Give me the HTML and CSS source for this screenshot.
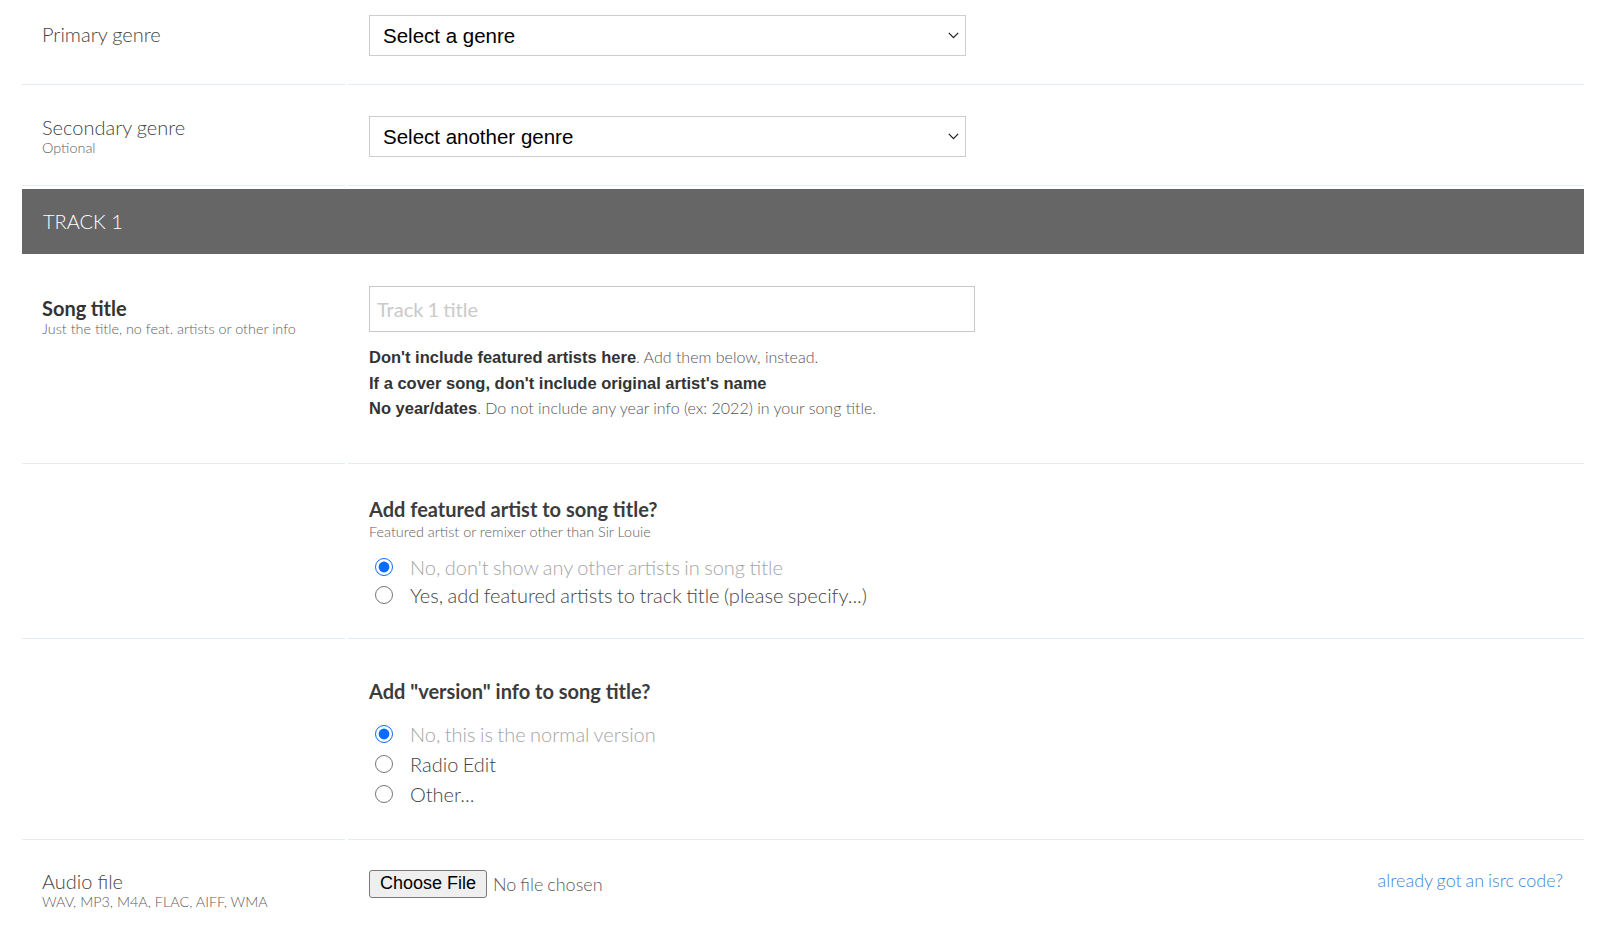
FILE: index.html
```html
<!DOCTYPE html>
<html lang="en">
<head>
<meta charset="utf-8">
<title>Release form</title>
<link rel="stylesheet" href="styles.css">
</head>
<body>
<form class="form">
  <div class="row row--first">
    <div class="cell cell--label"><div class="label">Primary genre</div></div>
    <div class="cell cell--field">
      <select class="select"><option>Select a genre</option></select>
    </div>
  </div>

  <div class="row row--second">
    <div class="cell cell--label">
      <div class="label">Secondary genre</div>
      <div class="hint">Optional</div>
    </div>
    <div class="cell cell--field">
      <select class="select"><option>Select another genre</option></select>
    </div>
  </div>

  <div class="track-bar">TRACK 1</div>

  <div class="row row--title">
    <div class="cell cell--label">
      <div class="label label--bold">Song title</div>
      <div class="hint">Just the title, no feat. artists or other info</div>
    </div>
    <div class="cell cell--field">
      <input class="text-input" type="text" placeholder="Track 1 title">
      <div class="help">
        <p><b>Don't include featured artists here</b>. Add them below, instead.</p>
        <p><b>If a cover song, don't include original artist's name</b></p>
        <p><b>No year/dates</b>. Do not include any year info (ex: 2022) in your song title.</p>
      </div>
    </div>
  </div>

  <div class="row row--featured">
    <div class="cell cell--label"></div>
    <div class="cell cell--field">
      <div class="question">Add featured artist to song title?</div>
      <div class="hint hint--question">Featured artist or remixer other than Sir Louie</div>
      <div class="radios radios--featured">
        <label class="radio radio--muted"><input type="radio" name="feat" checked><span>No, don't show any other artists in song title</span></label>
        <label class="radio"><input type="radio" name="feat"><span>Yes, add featured artists to track title (please specify...)</span></label>
      </div>
    </div>
  </div>

  <div class="row row--version">
    <div class="cell cell--label"></div>
    <div class="cell cell--field">
      <div class="question">Add "version" info to song title?</div>
      <div class="radios radios--version">
        <label class="radio radio--muted"><input type="radio" name="ver" checked><span>No, this is the normal version</span></label>
        <label class="radio"><input type="radio" name="ver"><span>Radio Edit</span></label>
        <label class="radio"><input type="radio" name="ver"><span>Other...</span></label>
      </div>
    </div>
  </div>

  <div class="row row--audio">
    <div class="cell cell--label cell--plain">
      <div class="label">Audio file</div>
      <div class="hint">WAV, MP3, M4A, FLAC, AIFF, WMA</div>
    </div>
    <div class="cell cell--field cell--plain">
      <div class="file-line">
        <div class="file">
          <button type="button" class="file-btn">Choose File</button>
          <span class="file-name">No file chosen</span>
        </div>
        <a class="isrc-link" href="#">already got an isrc code?</a>
      </div>
    </div>
  </div>
</form>
</body>
</html>
```

FILE: styles.css
```css
html, body {
  margin: 0;
  padding: 0;
  background: #ffffff;
}

body {
  font-family: Lato, "Open Sans", "Liberation Sans", sans-serif;
  font-weight: 300;
  color: #444444;
}

.form {
  width: 1562px;
  margin-left: 22px;
  display: flex;
  flex-direction: column;
  gap: 3px;
}

.row {
  display: grid;
  grid-template-columns: 323px 1236px;
  column-gap: 3px;
}

.cell {
  border-bottom: 1px solid #e3edf8;
  box-sizing: border-box;
}

.cell--plain {
  border-bottom: none;
}

.cell--label {
  padding: 27px 20px 0 20px;
}

.cell--field {
  padding: 28px 21px 28px 21px;
}

.label {
  font-size: 20px;
  line-height: 24px;
  color: #444444;
  word-spacing: -0.5px;
}

.label--bold {
  font-weight: 700;
  color: #333333;
}

.hint {
  font-size: 14.4px;
  line-height: 18px;
  font-weight: 300;
  color: #5e5e5e;
}

.hint--question {
  margin-top: 2px;
}

/* row specific spacing */
.row--first .cell--field { padding-top: 15px; }
.row--first .cell--label { padding-top: 22px; }

.row--title .cell--label { padding-top: 39px; }
.row--title .cell--field { padding-top: 29px; padding-bottom: 42px; }

.row--featured .cell--field { padding-top: 30px; padding-bottom: 28px; }
.row--version .cell--field { padding-top: 37px; padding-bottom: 30px; }

.row--audio .cell--label { padding-top: 26px; }
.row--audio .cell--field { padding-top: 27px; }

/* select */
.select {
  -webkit-appearance: none;
  appearance: none;
  display: block;
  width: 597px;
  height: 41px;
  margin: 0;
  padding: 0 30px 0 13px;
  border: 1px solid #cdcdcd;
  border-radius: 0;
  background: #ffffff url("data:image/svg+xml;utf8,<svg xmlns='http://www.w3.org/2000/svg' width='11' height='7' viewBox='0 0 11 7'><path d='M0.8 0.9 L5.5 5.6 L10.2 0.9' fill='none' stroke='%23222222' stroke-width='1.3'/></svg>") no-repeat right 6px center;
  font-family: "Liberation Sans", Arial, sans-serif;
  font-size: 20.5px;
  color: #000000;
  box-sizing: border-box;
}

/* track bar */
.track-bar {
  height: 65px;
  background: #666666;
  color: #ffffff;
  font-size: 20px;
  font-weight: 300;
  line-height: 65px;
  padding-left: 21px;
}

/* text input */
.text-input {
  display: block;
  width: 606px;
  height: 46px;
  margin: 0;
  padding: 0 7px;
  border: 1px solid #c8c8c8;
  border-radius: 0;
  box-sizing: border-box;
  font-family: Lato, "Open Sans", sans-serif;
  font-weight: 400;
  font-size: 20px;
  word-spacing: -1px;
  color: #333333;
}

.text-input::placeholder {
  color: #cacaca;
}

.help {
  margin-top: 12px;
  font-size: 16px;
  line-height: 25px;
  color: #555555;
}

.help p {
  margin: 0;
  height: 25.5px;
}

.help b {
  font-family: "Liberation Sans", Arial, sans-serif;
  font-size: 16.5px;
  line-height: 1;
  font-weight: 700;
  color: #333333;
}

/* questions + radios */
.question {
  font-size: 20px;
  line-height: 24px;
  font-weight: 700;
  color: #3c3c3c;
}

.radios {
  display: flex;
  flex-direction: column;
}

.radios--featured { margin-top: 12px; }
.radios--featured .radio { height: 28.5px; }
.radios--version { margin-top: 16px; }

.radio {
  display: flex;
  align-items: center;
  height: 30px;
  font-size: 20px;
  color: #444444;
  word-spacing: -1px;
}

.radio input {
  width: 18px;
  height: 18px;
  margin: 0 17px 0 6px;
  accent-color: #0a6cff;
}

.radio--muted {
  color: #a5a5a5;
}

/* audio file */
.file-line {
  display: flex;
  justify-content: space-between;
  align-items: center;
}

.file {
  display: flex;
  align-items: center;
  gap: 6px;
}

.file-btn {
  height: 28px;
  padding: 0 10px;
  margin: 0;
  border: 1px solid #7a7a7a;
  border-radius: 3px;
  background: #efefef;
  font-family: "Liberation Sans", Arial, sans-serif;
  font-size: 18px;
  color: #000000;
}

.file-name {
  font-size: 18px;
  color: #5a5a5a;
  word-spacing: -1px;
}

.isrc-link {
  align-self: flex-start;
  font-size: 18px;
  line-height: 20px;
  color: #3d88d6;
  text-decoration: none;
  word-spacing: -1px;
}
```
